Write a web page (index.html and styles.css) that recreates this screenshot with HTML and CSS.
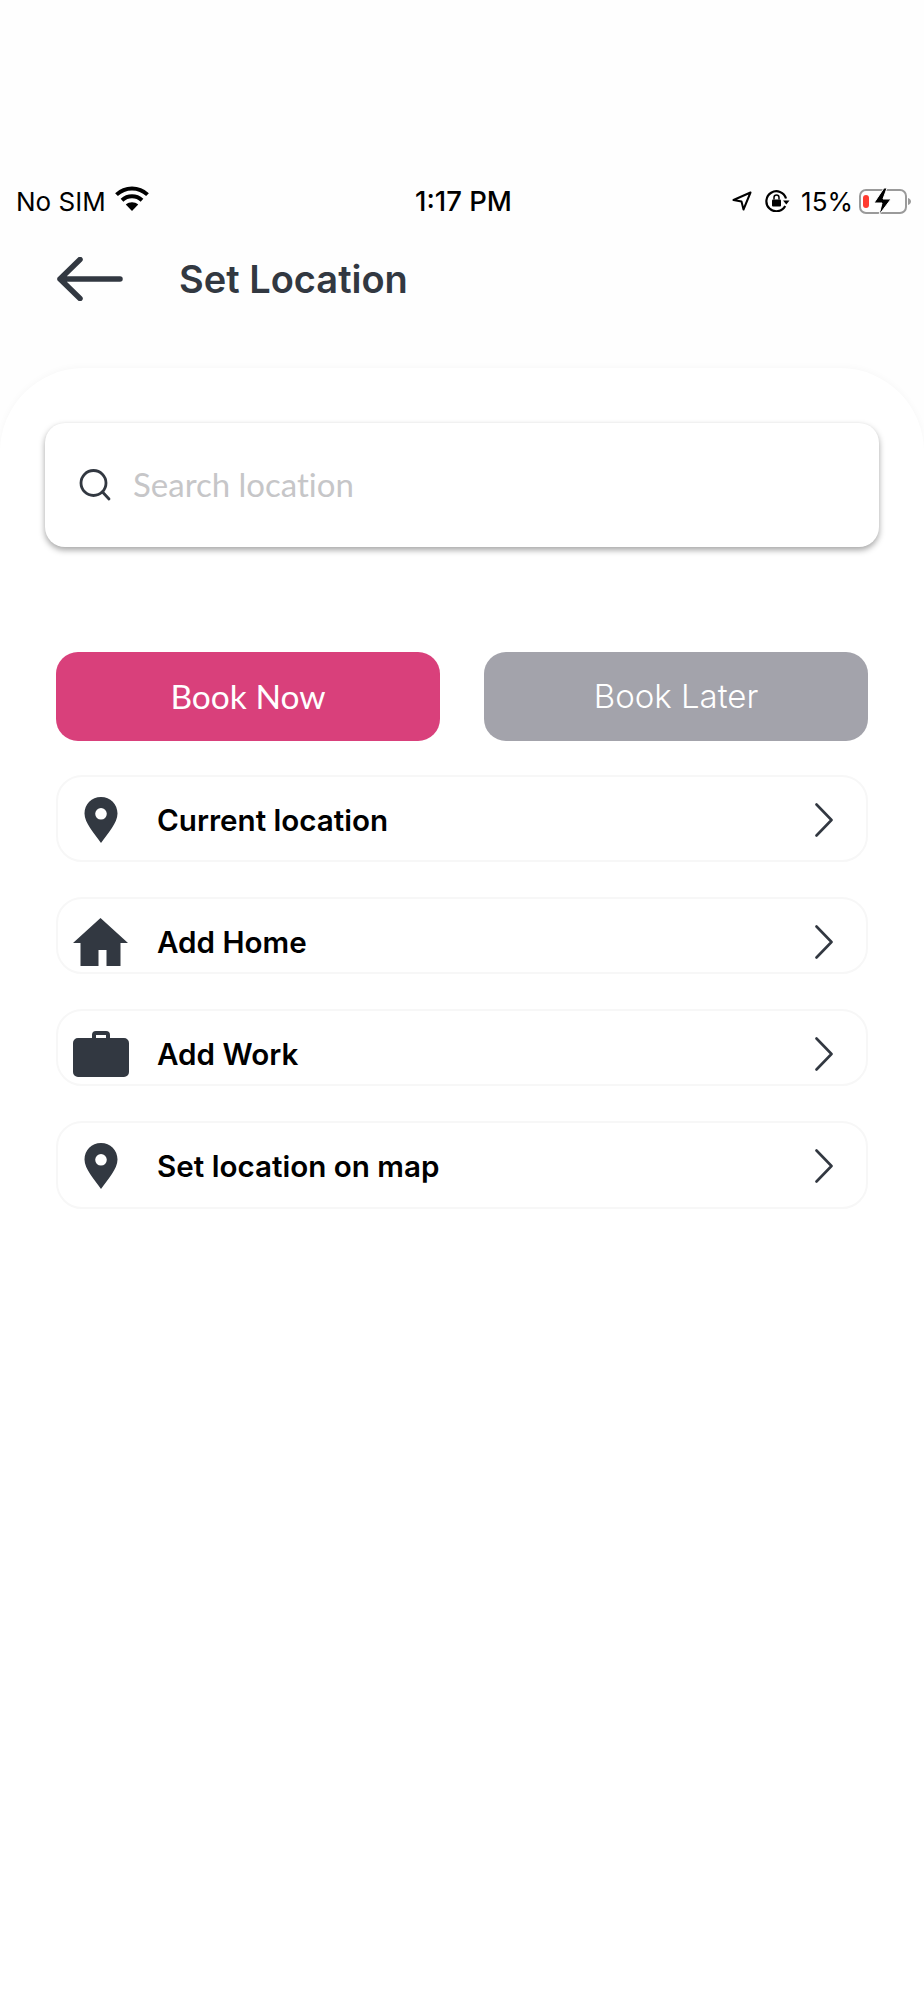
FILE: index.html
```html
<!DOCTYPE html>
<html lang="en">
<head>
<meta charset="utf-8">
<title>Set Location</title>
<link rel="stylesheet" href="styles.css">
</head>
<body>
<div class="status">
  <div class="status-left">
    <span>No SIM</span>
    <svg class="wifi" width="34" height="25" viewBox="0 0 34 25"><path d="M1.500 8.600C10.200.4 23.800.4 32.500 8.600" fill="none" stroke="#000" stroke-width="4"/><path d="M7 14.200c5.800-5.200 14.200-5.200 20 0" fill="none" stroke="#000" stroke-width="4"/><path d="M17 25l-6.200-6.600c3.600-2.900 8.800-2.900 12.400 0z" fill="#000"/></svg>
  </div>
  <div class="status-time">1:17 PM</div>
  <div class="status-right">
    <svg class="nav" width="20" height="20" viewBox="0 0 20 20"><path d="M18.500 1.500L1.500 9l8 1.500L11.500 18.500z" fill="none" stroke="#000" stroke-width="2" stroke-linejoin="round"/></svg>
    <svg class="lock" width="26" height="22" viewBox="0 0 26 22"><path d="M21 8.500A10 10 0 1 0 20.200 16" fill="none" stroke="#000" stroke-width="2.200"/><path d="M18 10.500h6.500l-3.200 4z" fill="#000"/><rect x="7" y="9.500" width="9" height="7" rx="1" fill="#000"/><path d="M9 9.500V7.500a2.500 2.500 0 0 1 5 0v2" fill="none" stroke="#000" stroke-width="1.500"/></svg>
    <span class="pct">15%</span>
    <svg class="battery" width="52" height="27" viewBox="0 0 52 27"><rect x="1" y="2" width="46" height="23" rx="6" fill="none" stroke="#9a9a9a" stroke-width="2"/><path d="M49 10c1.500.4 3 1.600 3 3.500s-1.500 3.100-3 3.500z" fill="#9a9a9a"/><rect x="4" y="7" width="6" height="13" rx="3" fill="#ff3b30"/><path d="M25 0L15 15h8l-3 12 12-16h-8l4-11z" fill="#000" stroke="#fff" stroke-width="1"/></svg>
  </div>
</div>

<header class="topbar">
  <svg class="back" width="66" height="44" viewBox="0 0 66 44"><path d="M23 2.500L3 22l20 19.500M3 22h60" fill="none" stroke="#323841" stroke-width="5.500" stroke-linecap="round" stroke-linejoin="round"/></svg>
  <h1 class="title">Set Location</h1>
</header>

<main class="sheet">
  <div class="search">
    <svg class="search-icon" width="32" height="32" viewBox="0 0 32 32"><circle cx="14.500" cy="14" r="12.500" fill="none" stroke="#323841" stroke-width="2.800"/><path d="M23.500 23l6.500 7" fill="none" stroke="#323841" stroke-width="2.800" stroke-linecap="round"/></svg>
    <span class="placeholder">Search location</span>
  </div>

  <div class="actions">
    <button class="btn btn-now">Book Now</button>
    <button class="btn btn-later">Book Later</button>
  </div>

  <div class="rows">
    <div class="row row-first">
      <span class="row-icon"><svg width="34" height="46" viewBox="0 0 34 46"><path fill-rule="evenodd" d="M17 0C7.600 0 .5 7.300.5 16.500.5 26 10 36 17 46c7-10 16.500-20 16.500-29.500C33.500 7.300 26.400 0 17 0zm0 11a5.800 5.800 0 1 1 0 11.600A5.800 5.800 0 0 1 17 11z" fill="#323841"/></svg></span>
      <span class="row-label">Current location</span>
      <svg class="chev" width="18" height="34" viewBox="0 0 18 34"><path d="M1.500 1.500L16.500 17 1.500 32.500" fill="none" stroke="#323841" stroke-width="2.600" stroke-linecap="round" stroke-linejoin="round"/></svg>
    </div>
    <div class="row row-short">
      <span class="row-icon"><svg width="55" height="48" viewBox="0 0 55 48"><path d="M27.500 0L0 25h7.500v23h18V32h8v16h14V25H55z" fill="#323841"/></svg></span>
      <span class="row-label">Add Home</span>
      <svg class="chev" width="18" height="34" viewBox="0 0 18 34"><path d="M1.500 1.500L16.500 17 1.500 32.500" fill="none" stroke="#323841" stroke-width="2.600" stroke-linecap="round" stroke-linejoin="round"/></svg>
    </div>
    <div class="row row-short">
      <span class="row-icon"><svg width="56" height="46" viewBox="0 0 56 46"><path fill-rule="evenodd" d="M19 7V4a4 4 0 0 1 4-4h10a4 4 0 0 1 4 4v3h14a5 5 0 0 1 5 5v29a5 5 0 0 1-5 5H5a5 5 0 0 1-5-5V12a5 5 0 0 1 5-5zm4 0h10V4H23z" fill="#323841"/></svg></span>
      <span class="row-label">Add Work</span>
      <svg class="chev" width="18" height="34" viewBox="0 0 18 34"><path d="M1.500 1.500L16.500 17 1.500 32.500" fill="none" stroke="#323841" stroke-width="2.600" stroke-linecap="round" stroke-linejoin="round"/></svg>
    </div>
    <div class="row row-tall">
      <span class="row-icon"><svg width="34" height="46" viewBox="0 0 34 46"><path fill-rule="evenodd" d="M17 0C7.600 0 .5 7.300.5 16.500.5 26 10 36 17 46c7-10 16.500-20 16.500-29.500C33.500 7.300 26.400 0 17 0zm0 11a5.800 5.800 0 1 1 0 11.600A5.800 5.800 0 0 1 17 11z" fill="#323841"/></svg></span>
      <span class="row-label">Set location on map</span>
      <svg class="chev" width="18" height="34" viewBox="0 0 18 34"><path d="M1.500 1.500L16.500 17 1.500 32.500" fill="none" stroke="#323841" stroke-width="2.600" stroke-linecap="round" stroke-linejoin="round"/></svg>
    </div>
  </div>
</main>
</body>
</html>
```

FILE: styles.css
```css
* { box-sizing: border-box; }

html, body { margin: 0; padding: 0; }

body {
  background: #fefefe;
  font-family: "Inter", "Liberation Sans", sans-serif;
  height: 2000px;
  overflow: hidden;
  display: flex;
  flex-direction: column;
}

.status {
  margin-top: 181px;
  height: 40px;
  padding: 0 13px 0 16px;
  display: grid;
  grid-template-columns: 1fr auto 1fr;
  align-items: center;
  color: #000;
  font-size: 26px;
}

.status-left { display: flex; align-items: center; gap: 9px; }
.wifi { margin-top: -6px; }
.status-time { font-size: 27.500px; font-weight: 500; }
.status-right { display: flex; align-items: center; justify-content: flex-end; }
.nav { margin-right: 13px; }
.lock { margin-right: 10px; }
.pct { margin-right: 6px; }

.topbar {
  margin-top: 28px;
  height: 60px;
  padding-left: 57px;
  display: flex;
  align-items: center;
  gap: 56px;
}

.title {
  margin: 0;
  font-family: "Inter", sans-serif;
  font-size: 38px;
  font-weight: 600;
  color: #323841;
}

.sheet {
  margin-top: 59px;
  flex: 1;
  background: #fff;
  border-radius: 84px 84px 0 0;
  box-shadow: 0 -1px 7px rgba(0, 0, 0, 0.03);
  padding: 55px 45px 0;
}

.search {
  height: 124px;
  background: #fff;
  border-radius: 20px;
  box-shadow: 0 3px 6px rgba(0, 0, 0, 0.36), 0 -1px 2px rgba(0, 0, 0, 0.01);
  display: flex;
  align-items: center;
  padding-left: 34px;
  gap: 22px;
}

.placeholder {
  font-family: "Lato", sans-serif;
  font-size: 33px;
  font-variant-ligatures: none;
  color: #c6c6c8;
  padding-bottom: 2px;
}

.actions {
  margin: 105px 11px 0;
  display: flex;
  gap: 44px;
}

.btn {
  flex: 1;
  height: 89px;
  border: 0;
  border-radius: 22px;
  color: #fff;
  padding: 0 0 2px;
}

.btn-now { background: #d9407b; font-family: "Lato", sans-serif; font-size: 33.500px; font-weight: 400; }
.btn-later { background: #a3a3ab; font-family: "Inter", sans-serif; font-size: 33px; font-weight: 300; }

.rows {
  margin: 34px 11px 0;
  display: flex;
  flex-direction: column;
  gap: 35px;
}

.row {
  border: 2px solid #f7f7f7;
  border-radius: 26px;
  background: #fff;
  display: flex;
  align-items: center;
  padding-right: 33px;
}

.row-first { height: 87px; padding-top: 2px; }
.row-tall { height: 88px; padding-top: 2px; }
.row-short { height: 77px; padding-top: 12px; }

.row-icon {
  width: 85px;
  flex: none;
  display: flex;
  justify-content: center;
  margin-right: 14px;
}

.row-label {
  flex: 1;
  color: #000;
  font-family: "Inter", sans-serif;
  font-size: 29.600px;
  font-weight: 600;
}

.chev { flex: none; }
```
